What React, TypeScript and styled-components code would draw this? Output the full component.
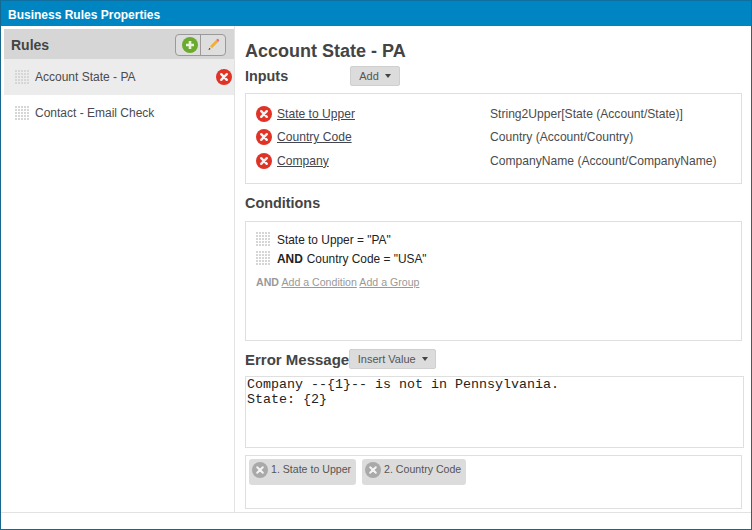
import React from "react";
import styled, { createGlobalStyle } from "styled-components";

const Global = createGlobalStyle`
  html, body { margin: 0; padding: 0; background: #fff; }
  * { box-sizing: border-box; }
`;

const Win = styled.div`
  width: 752px; height: 530px; display: flex; flex-direction: column;
  border: 1px solid #17688f; border-top-color: #0f709f; background: #fff;
  font-family: "Liberation Sans", Arial, sans-serif; font-size: 12px; color: #444;
`;
const TitleBar = styled.div`
  height: 25px; flex: none; background: #0085c3; color: #fff; font-weight: bold;
  font-size: 12px; line-height: 28px; padding-left: 7px;
`;
const Body = styled.div`
  height: 487px; flex: none; display: flex; border-bottom: 1px solid #e2e2e2;
`;
const Side = styled.div`
  width: 234px; flex: none; padding: 3px 0 0 3px; border-right: 1px solid #e2e2e2;
`;
const RulesHead = styled.div`
  height: 30px; background: #d6d6d6; display: flex; align-items: center; justify-content: space-between;
  padding: 1px 8px 0 7px; font-size: 14px; font-weight: bold; color: #444;
`;
const BtnGroup = styled.div`
  display: flex; width: 51px; height: 22px; border: 1px solid #9a9a9a; border-radius: 4px;
  background: #dedede;
`;
const GroupCell = styled.div<{ $w: number; $sep?: boolean }>`
  width: ${p => p.$w}px; display: flex; align-items: center; justify-content: center;
  ${p => (p.$sep ? "border-right: 1px solid #9a9a9a; padding-left: 3px;" : "")}
`;
const RuleRow = styled.div<{ $sel?: boolean }>`
  height: 36px; display: flex; align-items: center; padding: 0 2px 0 11px; gap: 5px;
  background: ${p => (p.$sel ? "#ececec" : "transparent")}; color: #4a4a50;
`;
const RuleName = styled.span`flex: 1;`;
const Main = styled.div`
  flex: 1; min-width: 0; padding: 0 8px 0 10px; display: flex; flex-direction: column;
`;
const Title = styled.div`
  font-size: 18px; font-weight: bold; color: #444; height: 23px; line-height: 23px; margin-top: 14px;
`;
const LabelRow = styled.div<{ $mt: number }>`
  display: flex; align-items: center; height: 20px; margin-top: ${p => p.$mt}px;
`;
const Label = styled.div<{ $w?: number; $size?: number }>`
  font-size: ${p => p.$size ?? 14.4}px; font-weight: bold; color: #444; ${p => (p.$w ? `width: ${p.$w}px;` : "")}
`;
const DropBtn = styled.div<{ $w: number }>`
  width: ${p => p.$w}px; height: 20px; background: #dcdcdc; border: 1px solid #cfcfcf; border-radius: 2px;
  display: flex; align-items: center; justify-content: center; gap: 6px; font-size: 11px; color: #555;
  &::after { content: ""; border: 3px solid transparent; border-top: 4px solid #444; border-bottom: 0; }
`;
const Panel = styled.div<{ $h: number; $mt: number; $w?: number }>`
  height: ${p => p.$h}px; margin-top: ${p => p.$mt}px; width: ${p => p.$w ?? 497}px;
  border: 1px solid #dfdfdf; flex: none;
`;
const InputsPanel = styled(Panel)`padding: 8px 10px 0;`;
const InputRow = styled.div`display: flex; align-items: center; height: 23.5px; font-size: 12.1px;`;
const InputLink = styled.span`
  width: 213px; margin-left: 5px; color: #45454f; text-decoration: underline;
`;
const InputVal = styled.span`color: #4b4b4b; white-space: nowrap;`;
const CondPanel = styled(Panel)`padding: 8px 10px 0;`;
const CondRow = styled.div`display: flex; align-items: center; height: 19px; gap: 6px; color: #222; font-size: 11.9px;`;
const And = styled.b`color: #222; margin-right: -2px;`;
const AddLine = styled.div`
  margin-top: 8px; font-size: 10.6px; color: #999; display: flex; gap: 2.5px; height: 13px; line-height: 13px;
  font-weight: normal;
`;
const AddLink = styled.span`text-decoration: underline;`;
const MsgBox = styled(Panel)`
  padding: 0 1px; font-family: "Liberation Mono", "Courier New", monospace; font-size: 13.33px; line-height: 15px;
  color: #222; white-space: pre;
`;
const TagsPanel = styled(Panel)`padding: 3px 3px 0; display: flex; gap: 6px; align-items: flex-start;`;
const Tag = styled.div`
  height: 26px; display: flex; align-items: flex-start; gap: 3px; background: #dcdcdc; border-radius: 3px;
  padding: 3px 5px 0 3px; font-size: 10.6px; line-height: 15px; color: #555;
`;

const Grip = ({ size = 15 }: { size?: number }) => {
  const dots = [];
  for (let y = 0; y < 5; y++) for (let x = 0; x < 5; x++)
    dots.push(<rect key={`${x}-${y}`} x={x * 3} y={y * 3} width="2" height="2" fill="#d6d6d6" />);
  return <svg width={size} height={size} viewBox="0 0 15 15" style={{ flex: "none" }}>{dots}</svg>;
};

const XCircle = ({ fill = "#e03325", size = 16, strokeW = 2.4 }: { fill?: string; size?: number; strokeW?: number }) => (
  <svg width={size} height={size} viewBox="0 0 16 16" style={{ flex: "none" }}>
    <circle cx="8" cy="8" r="8" fill={fill} />
    <path d="M5.2 5.2l5.6 5.6M10.8 5.2l-5.6 5.6" stroke="#f4f4f4" strokeWidth={strokeW} strokeLinecap="round" />
  </svg>
);

const Plus = () => (
  <svg width="16" height="16" viewBox="0 0 16 16">
    <circle cx="8" cy="8" r="8" fill="#6aab2e" />
    <path d="M8 4v8M4 8h8" stroke="#e9f3df" strokeWidth="2.6" />
  </svg>
);

const Pencil = () => (
  <svg width="13" height="13" viewBox="0 0 12 13">
    <path d="M2.5 8.2 8.6 2l2 2-6.1 6.2z" fill="#f0b030" />
    <path d="M8.6 2l1-1a.9.9 0 0 1 1.2 0l.7.8a.9.9 0 0 1 0 1.2l-.9 1z" fill="#e8707a" />
    <path d="M2.5 8.2 1 12l3.5-1.8z" fill="#e8d5b0" />
    <path d="M1.8 9.9 1 12l2.1-1.1z" fill="#222" />
  </svg>
);

export default function App() {
  return (
    <Win>
      <Global />
      <TitleBar>Business Rules Properties</TitleBar>
      <Body>
        <Side>
          <RulesHead>
            Rules
            <BtnGroup>
              <GroupCell $w={25} $sep><Plus /></GroupCell>
              <GroupCell $w={24}><Pencil /></GroupCell>
            </BtnGroup>
          </RulesHead>
          <RuleRow $sel>
            <Grip />
            <RuleName>Account State - PA</RuleName>
            <XCircle />
          </RuleRow>
          <RuleRow>
            <Grip />
            <RuleName>Contact - Email Check</RuleName>
          </RuleRow>
        </Side>
        <Main>
          <Title>Account State - PA</Title>
          <LabelRow $mt={3}>
            <Label $w={105}>Inputs</Label>
            <DropBtn $w={50}>Add</DropBtn>
          </LabelRow>
          <InputsPanel $h={91} $mt={7}>
            <InputRow><XCircle /><InputLink>State to Upper</InputLink><InputVal>String2Upper[State (Account/State)]</InputVal></InputRow>
            <InputRow><XCircle /><InputLink>Country Code</InputLink><InputVal>Country (Account/Country)</InputVal></InputRow>
            <InputRow><XCircle /><InputLink>Company</InputLink><InputVal>CompanyName (Account/CompanyName)</InputVal></InputRow>
          </InputsPanel>
          <LabelRow $mt={9}><Label>Conditions</Label></LabelRow>
          <CondPanel $h={120} $mt={8}>
            <CondRow><Grip />State to Upper = "PA"</CondRow>
            <CondRow><Grip /><And>AND</And>Country Code = "USA"</CondRow>
            <AddLine><b>AND</b><AddLink>Add a Condition</AddLink><AddLink>Add a Group</AddLink></AddLine>
          </CondPanel>
          <LabelRow $mt={8}>
            <Label $size={15}>Error Message</Label>
            <DropBtn $w={87}>Insert Value</DropBtn>
          </LabelRow>
          <MsgBox $h={72} $mt={7} $w={499}>{"Company --{1}-- is not in Pennsylvania.\nState: {2}"}</MsgBox>
          <TagsPanel $h={54} $mt={7}>
            <Tag><XCircle fill="#a9a9a9" strokeW={2} />1. State to Upper</Tag>
            <Tag><XCircle fill="#a9a9a9" strokeW={2} />2. Country Code</Tag>
          </TagsPanel>
        </Main>
      </Body>
    </Win>
  );
}
